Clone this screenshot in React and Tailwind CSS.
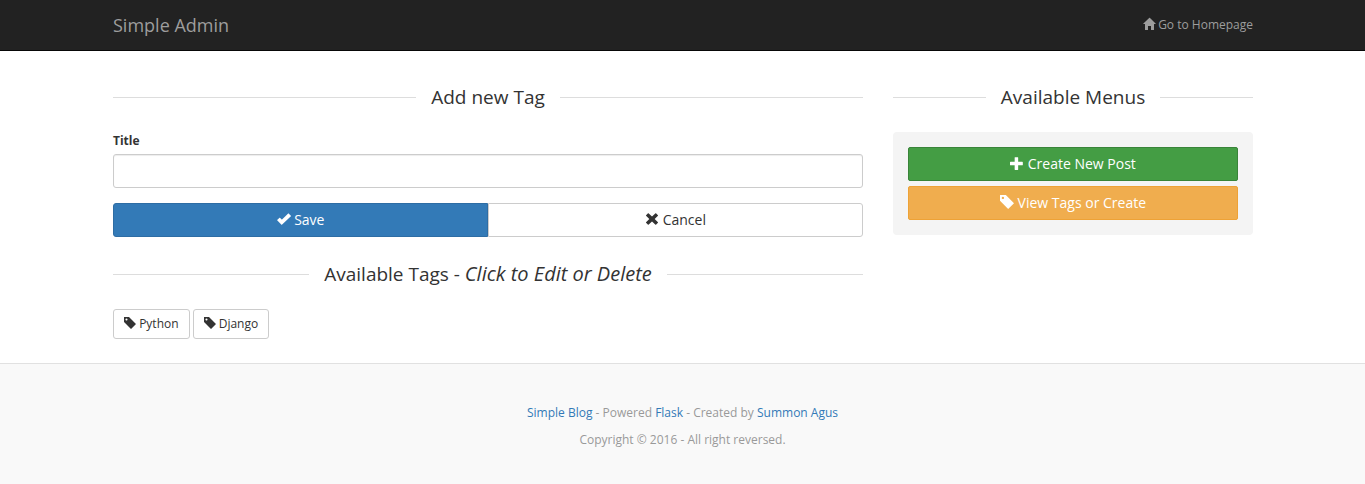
const PATHS = {
  home: 'M18 618l620 608q8 7 18.5 7t17.5 -7l608 -608q8 -8 5.5 -13t-12.5 -5h-175v-575q0 -10 -7.5 -17.5t-17.5 -7.5h-250q-10 0 -17.5 7.5t-7.5 17.5v375h-300v-375q0 -10 -7.5 -17.5t-17.5 -7.5h-250q-10 0 -17.5 7.5t-7.5 17.5v575h-175q-10 0 -12.5 5t5.5 13z',
  plus: 'M450 1100h200q21 0 35.5 -14.5t14.5 -35.5v-350h350q21 0 35.5 -14.5t14.5 -35.5v-200q0 -21 -14.5 -35.5t-35.5 -14.5h-350v-350q0 -21 -14.5 -35.5t-35.5 -14.5h-200q-21 0 -35.5 14.5t-14.5 35.5v350h-350q-21 0 -35.5 14.5t-14.5 35.5v200q0 21 14.5 35.5t35.5 14.5h350v350q0 21 14.5 35.5t35.5 14.5z',
  tag: 'M1 700v475q0 10 7.5 17.5t17.5 7.5h474l700 -700l-500 -500zM148 953q0 -42 29 -71q30 -30 71.5 -30t71.5 30q29 29 29 71t-29 71q-30 30 -71.5 30t-71.5 -30q-29 -29 -29 -71z',
  check: 'M385 110q16 -16 32 0l775 730q16 16 0 32l-200 205q-16 16 -32 0l-528 -518q-16 -16 -32 0l-150 150q-16 16 -32 0l-205 -190q-16 -16 0 -32z',
  cross: 'M90 920l170 170q18 16 36 0l304 -270l304 270q18 16 36 0l170 -170q16 -18 0 -36l-280 -284l280 -284q16 -18 0 -36l-170 -170q-18 -16 -36 0l-304 270l-304 -270q-18 -16 -36 0l-170 170q-16 18 0 36l280 284l-280 284q-16 18 0 36z',
};

function Icon({ name }) {
  return (
    <svg viewBox="0 0 1200 1200" fill="currentColor" aria-hidden="true" className="inline-block h-[1em] w-[1em] overflow-visible align-[-1px]">
      <path fillRule="evenodd" transform="translate(0 1200) scale(1 -1)" d={PATHS[name]} />
    </svg>
  );
}

function Heading({ children }) {
  return (
    <h2 className="mb-[25px] flex items-center gap-[15px] text-[19px] leading-5 before:h-px before:flex-1 before:bg-[#ddd] after:h-px after:flex-1 after:bg-[#ddd]">
      <span>{children}</span>
    </h2>
  );
}

const tags = ['Python', 'Django'];

export default function App() {
  return (
    <div className="flex min-h-screen flex-col bg-white font-['Open_Sans',sans-serif] text-xs text-[#333]">
      <header className="border-b border-[#080808] bg-[#222] text-[#9d9d9d]">
        <nav className="mx-auto flex h-[50px] w-full max-w-[1171px] items-center justify-between pr-[15px] pl-4">
          <a href="#" className="text-lg">Simple Admin</a>
          <a href="#"><Icon name="home" /> Go to Homepage</a>
        </nav>
      </header>

      <main className="mx-auto grid w-full max-w-[1171px] grid-cols-[75fr_36fr] gap-[30px] pt-9 pr-[15px] pb-6 pl-4">
        <div>
          <Heading>Add new Tag</Heading>
          <form>
            <label htmlFor="title" className="mb-[5px] block leading-[17px] font-bold">Title</label>
            <input id="title" type="text" className="mb-[15px] block h-[34px] w-full rounded-[3px] border border-[#ccc] px-3 text-sm shadow-[inset_0_1px_1px_rgba(0,0,0,0.075)]" />
            <div className="mb-[27px] grid h-[34px] grid-cols-2 text-sm">
              <button type="submit" className="rounded-l-[3px] border border-[#2e6da4] bg-[#337ab7] text-white"><Icon name="check" /> Save</button>
              <button type="button" className="rounded-r-[3px] border border-[#ccc] bg-white"><Icon name="cross" /> Cancel</button>
            </div>
          </form>
          <Heading>Available Tags - <em className="text-xl leading-5">Click to Edit or Delete</em></Heading>
          <div className="flex gap-[3px]">
            {tags.map((tag) => (
              <a key={tag} href="#" className="rounded-[3px] border border-[#ccc] px-[10px] py-[5px] leading-[18px]">
                <Icon name="tag" /> {tag}
              </a>
            ))}
          </div>
        </div>

        <aside>
          <Heading>Available Menus</Heading>
          <div className="flex flex-col gap-[5px] rounded-[4px] bg-[#f4f4f4] p-[15px] text-center text-sm text-white">
            <a href="#" className="rounded-[2px] border border-[#398439] bg-[#449d44] py-[6px]"><Icon name="plus" /> Create New Post</a>
            <a href="#" className="rounded-[2px] border border-[#eea236] bg-[#f0ad4e] py-[6px]"><Icon name="tag" /> View Tags or Create</a>
          </div>
        </aside>
      </main>

      <footer className="flex-1 border-t border-[#e1e1e1] bg-[#f9f9f9] pt-10 pb-9 text-center text-[#999]">
        <p className="mb-[10px] leading-[17px]">
          <a href="#" className="text-[#337ab7]">Simple Blog</a> - Powered <a href="#" className="text-[#337ab7]">Flask</a> - Created by <a href="#" className="text-[#337ab7]">Summon Agus</a>
        </p>
        <p className="leading-[17px]">Copyright © 2016 - All right reversed.</p>
      </footer>
    </div>
  );
}
